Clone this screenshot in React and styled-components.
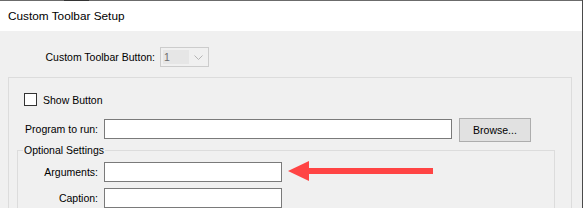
import React from 'react';
import styled, { createGlobalStyle } from 'styled-components';

const GlobalStyle = createGlobalStyle`
  html, body {
    margin: 0;
    padding: 0;
    background: #ffffff;
  }
  * {
    box-sizing: border-box;
  }
`;

const Window = styled.div`
  width: 583px;
  height: 208px;
  display: flex;
  flex-direction: column;
  overflow: hidden;
  border-right: 1px solid #4a4a4a;
  font-family: "Liberation Sans", Arial, sans-serif;
  font-size: 10.5px;
  color: #000;
`;

const TopEdge = styled.div`
  height: 1px;
  flex: none;
  background: linear-gradient(to right, #6b6b6b 0, #6b6b6b 64px, #333 64px, #333 89px, #6b6b6b 89px);
`;

const TitleBar = styled.div`
  height: 30px;
  flex: none;
  display: flex;
  align-items: center;
  padding-left: 8px;
  background: #ffffff;
  font-size: 11.8px;
`;

const Body = styled.div`
  flex: 1;
  display: flex;
  flex-direction: column;
  padding: 16px 0 0 8px;
  background: #f0f0f0;
`;

const Row = styled.div`
  display: flex;
  align-items: ${p => p.$align || 'center'};
  gap: ${p => p.$gap || 6}px;
  margin-top: ${p => p.$top || 0}px;
  padding-left: ${p => p.$indent || 0}px;
`;

const Label = styled.span`
  width: ${p => p.$width}px;
  flex: none;
  text-align: right;
  white-space: nowrap;
  line-height: ${p => p.$line || 'normal'};
`;

const Combo = styled.div`
  width: 49px;
  height: 20px;
  display: flex;
  align-items: center;
  padding: 0 2px;
  border: 1px solid #cccccc;
  background: #f0f0f0;
`;

const ComboValue = styled.span`
  width: 26px;
  height: 14px;
  display: flex;
  align-items: center;
  padding-left: 1px;
  background: #e6e6e6;
  color: #6d6d6d;
`;

const Chevron = styled.svg`
  margin-left: 5px;
`;

const Group = styled.div`
  flex: 1;
  width: 564px;
  margin-top: 10px;
  padding-top: 15px;
  border: 1px solid #dcdcdc;
  border-bottom: none;
`;

const CheckBox = styled.span`
  width: 13px;
  height: 13px;
  flex: none;
  border: 1px solid #333333;
  background: #ffffff;
`;

const TextBox = styled.div`
  width: ${p => p.$width}px;
  height: 20px;
  flex: none;
  margin-top: ${p => p.$top || 0}px;
  border: 1px solid #7a7a7a;
  background: #ffffff;
`;

const Button = styled.div`
  width: 72px;
  height: 24px;
  display: flex;
  align-items: center;
  justify-content: center;
  margin-left: 1px;
  border: 1px solid #adadad;
  background: #e1e1e1;
`;

const SubGroup = styled.fieldset`
  width: 538px;
  margin: 0 0 0 8px;
  padding: 3px 0 0 0;
  border: 1px solid #dcdcdc;
  border-bottom: none;
  min-width: 0;
`;

const Legend = styled.legend`
  margin-left: 5px;
  padding: 0 1px;
  line-height: 16px;
  font-size: 10.5px;
`;

const Arrow = () => (
  <svg width="146" height="21" viewBox="0 0 146 21">
    <polygon points="0,10 21,0 21,7 145,7 145,13 21,13 21,20" fill="#ff4444" />
  </svg>
);

const App = () => (
  <>
    <GlobalStyle />
    <Window>
      <TopEdge />
      <TitleBar>Custom Toolbar Setup</TitleBar>
      <Body>
        <Row $indent={35} $gap={5}>
          <Label $width={112}>Custom Toolbar Button:</Label>
          <Combo>
            <ComboValue>1</ComboValue>
            <Chevron width="9" height="5" viewBox="0 0 9 5">
              <polyline points="0.5,0.5 4.5,4.5 8.5,0.5" fill="none" stroke="#b5b5b5" strokeWidth="1" />
            </Chevron>
          </Combo>
        </Row>
        <Group>
          <Row $indent={15}>
            <CheckBox />
            <span>Show Button</span>
          </Row>
          <Row $top={12} $align="flex-start">
            <Label $width={89} $line="22px">Program to run:</Label>
            <TextBox $width={348} $top={1} />
            <Button>Browse...</Button>
          </Row>
          <SubGroup>
            <Legend>Optional Settings</Legend>
            <Row>
              <Label $width={80}>Arguments:</Label>
              <TextBox $width={178} />
              <Arrow />
            </Row>
            <Row $top={6}>
              <Label $width={80}>Caption:</Label>
              <TextBox $width={178} />
            </Row>
          </SubGroup>
        </Group>
      </Body>
    </Window>
  </>
);

export default App;
